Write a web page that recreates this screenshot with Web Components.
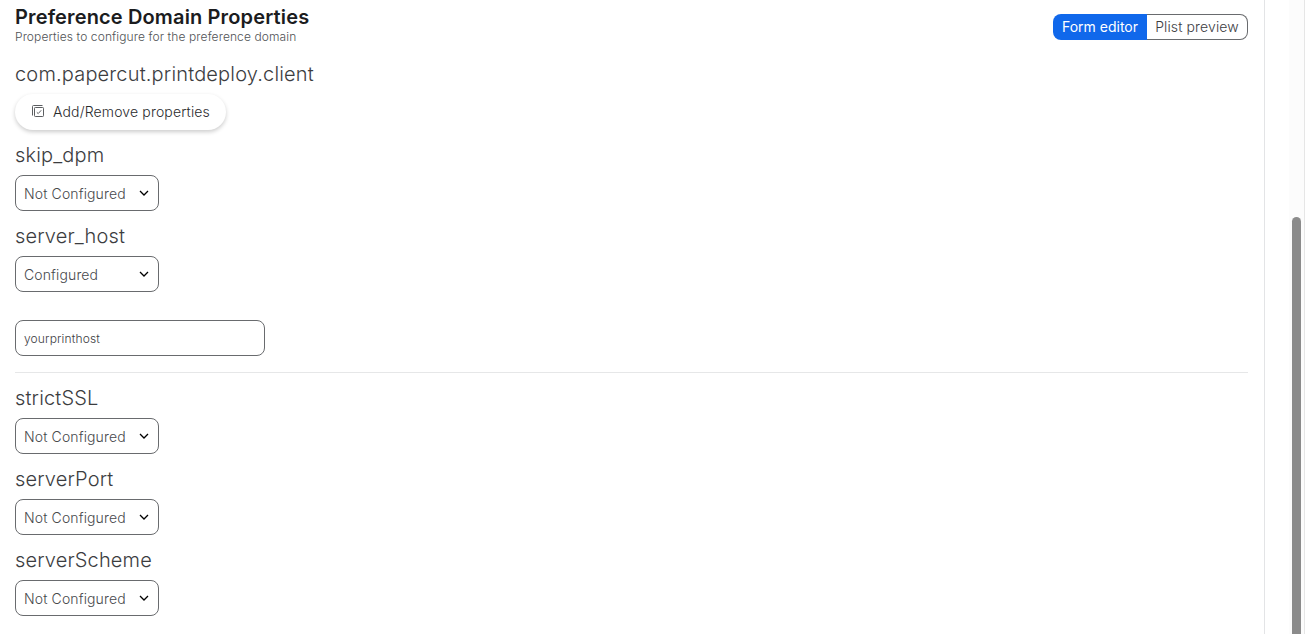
<!DOCTYPE html>
<html lang="en">
<head>
<meta charset="utf-8">
<title>Preference Domain Properties</title>
<style>
  html, body { height: 100%; margin: 0; overflow: hidden; background: #fff; }
  body { font-family: Inter, "Liberation Sans", sans-serif; font-weight: 300; color: #3c3d3f; }
</style>
</head>
<body>
<editor-shell>
  <panel-header>
    <span slot="title">Preference Domain Properties</span>
    <span slot="subtitle">Properties to configure for the preference domain</span>
    <view-toggle slot="actions">
      <span slot="active">Form editor</span>
      <span slot="other">Plist preview</span>
    </view-toggle>
  </panel-header>
  <domain-section name="com.papercut.printdeploy.client">
    <pill-button>Add/Remove properties</pill-button>
  </domain-section>
  <property-field name="skip_dpm" state="Not Configured"></property-field>
  <property-field name="server_host" state="Configured">
    <text-field value="yourprinthost"></text-field>
  </property-field>
  <property-field name="strictSSL" state="Not Configured"></property-field>
  <property-field name="serverPort" state="Not Configured"></property-field>
  <property-field name="serverScheme" state="Not Configured"></property-field>
</editor-shell>

<script>
class EditorShell extends HTMLElement {
  connectedCallback() {
    this.attachShadow({ mode: 'open' });
    this.shadowRoot.innerHTML = `
      <style>
        :host { display: flex; height: 100vh; overflow: hidden; }
        main {
          flex: 1;
          box-sizing: border-box;
          padding: 5px 16px 0 15px;
          border-right: 1px solid #e3e4e6;
        }
        .gutter { width: 24px; }
        .track {
          box-sizing: border-box;
          width: 16px;
          padding: 217px 3px 0;
          background: #fcfcfc;
          border-right: 1px solid #e6e6e6;
        }
        .thumb {
          width: 9px;
          height: 480px;
          border-radius: 5px;
          background: #8b8b8b;
        }
      </style>
      <main><slot></slot></main>
      <div class="gutter"></div>
      <div class="track"><div class="thumb"></div></div>
    `;
  }
}
customElements.define('editor-shell', EditorShell);

class PanelHeader extends HTMLElement {
  connectedCallback() {
    this.attachShadow({ mode: 'open' });
    this.shadowRoot.innerHTML = `
      <style>
        :host {
          display: flex;
          justify-content: space-between;
          align-items: flex-start;
          height: 57px;
        }
        .title {
          font-size: 20px;
          font-weight: 600;
          line-height: 24px;
          letter-spacing: 0.14px;
          color: #1b1c1e;
        }
        .subtitle {
          font-size: 12px;
          font-weight: 300;
          line-height: 16px;
          letter-spacing: 0.11px;
          color: #505255;
        }
        .actions { margin-top: 9px; }
      </style>
      <div>
        <div class="title"><slot name="title"></slot></div>
        <div class="subtitle"><slot name="subtitle"></slot></div>
      </div>
      <div class="actions"><slot name="actions"></slot></div>
    `;
  }
}
customElements.define('panel-header', PanelHeader);

class ViewToggle extends HTMLElement {
  connectedCallback() {
    this.attachShadow({ mode: 'open' });
    this.shadowRoot.innerHTML = `
      <style>
        :host {
          display: flex;
          width: 195px;
          height: 26px;
          font-size: 14px;
          line-height: 26px;
          text-align: center;
          white-space: nowrap;
        }
        div { box-sizing: border-box; }
        .active {
          width: 94px;
          border-radius: 8px 0 0 8px;
          background: #1068eb;
          color: #fff;
          font-weight: 400;
        }
        .other {
          width: 101px;
          border: 1px solid #696b6e;
          border-left: 0;
          border-radius: 0 8px 8px 0;
          line-height: 24px;
          letter-spacing: 0.12px;
        }
      </style>
      <div class="active"><slot name="active"></slot></div>
      <div class="other"><slot name="other"></slot></div>
    `;
  }
}
customElements.define('view-toggle', ViewToggle);

class DomainSection extends HTMLElement {
  connectedCallback() {
    this.attachShadow({ mode: 'open' });
    this.shadowRoot.innerHTML = `
      <style>
        :host { display: block; height: 81px; }
        .name { font-size: 20px; line-height: 24px; letter-spacing: 0.17px; margin-bottom: 8px; }
      </style>
      <div class="name">${this.getAttribute('name')}</div>
      <slot></slot>
    `;
  }
}
customElements.define('domain-section', DomainSection);

class PillButton extends HTMLElement {
  connectedCallback() {
    this.attachShadow({ mode: 'open' });
    this.shadowRoot.innerHTML = `
      <style>
        :host {
          display: flex;
          align-items: center;
          box-sizing: border-box;
          width: 211px;
          height: 36px;
          padding: 0 0 1px 17px;
          border-radius: 18px;
          box-shadow: 0 2px 4px rgba(0, 0, 0, 0.2);
          background: #fff;
          color: #2a2b2d;
          font-size: 14px;
          letter-spacing: 0.15px;
          white-space: nowrap;
        }
        svg { margin: -1px 8px 0 0; }
      </style>
      <svg width="13" height="13" viewBox="0 0 13 13" fill="none" stroke="#5c5e61">
        <path d="M.5 10.5V1.5a1 1 0 0 1 1-1H10.5"/>
        <rect x="2.5" y="2.5" width="9" height="9" rx=".8"/>
        <path d="M4.8 7.3l1.4 1.3 3-3.3"/>
      </svg>
      <slot></slot>
    `;
  }
}
customElements.define('pill-button', PillButton);

class PropertyField extends HTMLElement {
  connectedCallback() {
    this.attachShadow({ mode: 'open' });
    const hasValue = this.children.length > 0;
    this.shadowRoot.innerHTML = `
      <style>
        :host { display: block; }
        .name { font-size: 20px; line-height: 24px; letter-spacing: 0.15px; margin-bottom: 8px; }
        .select {
          display: flex;
          align-items: center;
          justify-content: space-between;
          box-sizing: border-box;
          width: 144px;
          height: 36px;
          margin-bottom: 13px;
          padding: 1px 9px 0 8px;
          border: 1px solid #696b6e;
          border-radius: 8px;
          font-size: 14px;
          letter-spacing: 0.13px;
          color: #47494c;
          white-space: nowrap;
        }
        svg { margin-top: -1px; }
        .value {
          margin: 28px 0 13px;
          padding-bottom: 16px;
          border-bottom: 1px solid #e6e7e8;
        }
      </style>
      <div class="name">${this.getAttribute('name')}</div>
      <div class="select">
        <span>${this.getAttribute('state')}</span>
        <svg width="10" height="7" viewBox="0 0 10 7" fill="none" stroke="#000" stroke-width="1.3">
          <path d="M1 1l4 4 4-4"/>
        </svg>
      </div>
      ${hasValue ? '<div class="value"><slot></slot></div>' : ''}
    `;
  }
}
customElements.define('property-field', PropertyField);

class TextField extends HTMLElement {
  connectedCallback() {
    this.attachShadow({ mode: 'open' });
    this.shadowRoot.innerHTML = `
      <style>
        :host {
          display: flex;
          align-items: center;
          box-sizing: border-box;
          width: 250px;
          height: 36px;
          padding: 1px 8px 0;
          border: 1px solid #696b6e;
          border-radius: 8px;
          font-size: 12px;
          letter-spacing: 0.15px;
        }
      </style>
      <span>${this.getAttribute('value')}</span>
    `;
  }
}
customElements.define('text-field', TextField);
</script>
</body>
</html>
